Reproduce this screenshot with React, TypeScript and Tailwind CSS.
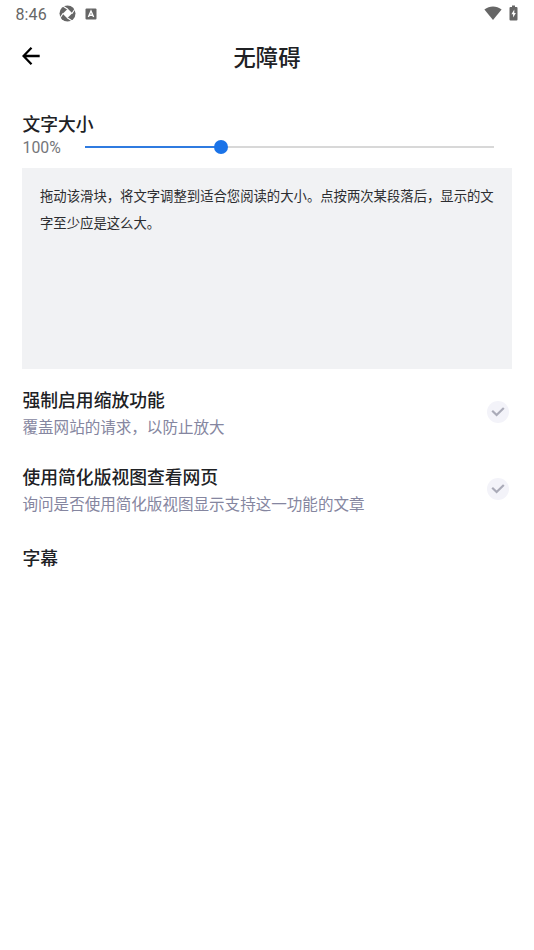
import React, { useState } from 'react';

interface SettingRowProps {
  title: string;
  summary: string;
  className?: string;
}

const CheckMark: React.FC = () => (
  <span className="flex h-[22px] w-[22px] shrink-0 items-center justify-center rounded-full bg-[#f3f3f9]">
    <svg width="14" height="10" viewBox="0 0 14 10" fill="none">
      <path d="M1.2 3.7 5.6 8 12.8 1" stroke="#aaabb8" strokeWidth="2.2" />
    </svg>
  </span>
);

const SettingRow: React.FC<SettingRowProps> = ({ title, summary, className }) => (
  <div className={`flex items-center justify-between pr-[25px] pl-[22.5px] ${className ?? ''}`}>
    <div>
      <h2 className="pt-px text-[17.8px] leading-[28px] font-medium text-[#202124]">{title}</h2>
      <p className="text-[15.55px] leading-[27px] text-[#8586a0]">{summary}</p>
    </div>
    <CheckMark />
  </div>
);

const StatusBar: React.FC = () => (
  <div className="flex h-7 items-center justify-between pr-4 pl-[15.5px] text-[#666666]">
    <div className="flex items-center">
      <span className="w-[43px] pt-px font-[Roboto] text-[16px] leading-[27px] tracking-[0.1px]">8:46</span>
      {/* shutter style notification icon */}
      <svg className="mb-px" width="17" height="17" viewBox="0 0 17 17" fill="none">
        <circle cx="8.5" cy="8.5" r="8" fill="currentColor" />
        <path d="M8.8 3.7 13.3 8.2 8.2 13.3 3.7 8.8Z" fill="#fff" />
        <path d="M8.8 4.2 4.2 1.2M12.8 8.8l3-4.600M8.200 12.800l4.600 3M4.200 8.200 1.200 12.800" stroke="#fff" strokeWidth="1.1" />
      </svg>
      <svg className="mb-px ml-[9.5px]" width="12" height="12" viewBox="0 0 12 12" fill="none">
        <rect x="0.5" y="0.5" width="11" height="11" rx="1" fill="currentColor" />
        <path d="M3.4 9 6 3l2.6 6M4.3 7.2h3.4" stroke="#fff" strokeWidth="1.4" />
      </svg>
    </div>
    <div className="flex items-center gap-[7px]">
      <svg className="mb-[3px]" width="18" height="14" viewBox="0 0 18 14">
        <path d="M9 14 .4 3.4C5.6-.6 12.4-.6 17.6 3.4Z" fill="currentColor" />
      </svg>
      <svg className="mb-[3px]" width="9" height="16" viewBox="0 0 9 16">
        <path d="M3 .5h3V2h1.5a1 1 0 0 1 1 1v11.5a1 1 0 0 1-1 1h-6a1 1 0 0 1-1-1V3a1 1 0 0 1 1-1H3Z" fill="currentColor" />
        <path d="M5.3 4.5 2.4 9.3h1.7v3.3l2.8-4.7H5.3Z" fill="#fff" />
      </svg>
    </div>
  </div>
);

const App: React.FC = () => {
  const [scale, setScale] = useState(100);
  // slider runs from 50% to 200%
  const percent = ((scale - 50) / 150) * 100;

  return (
    <main className="h-[950px] w-[534px] overflow-hidden bg-white font-['Noto_Sans_CJK_SC',sans-serif] text-[#202124]">
      <StatusBar />

      <header className="grid h-[60px] grid-cols-[1fr_auto_1fr] items-center px-[22px]">
        <button type="button" aria-label="返回" className="mb-1">
          <svg width="19" height="20" viewBox="0 0 19 20" fill="none">
            <path d="M17.7 10H1.7M9.5 1.7 1.5 10l8 8.3" stroke="#000" strokeWidth="2.3" />
          </svg>
        </button>
        <h1 className="mb-1 text-[22.3px] leading-8 font-medium">无障碍</h1>
      </header>

      <section className="px-[22px] pt-[21px]">
        <h2 className="pl-[0.5px] text-[17.8px] leading-[28px] font-medium">文字大小</h2>
        <div className="mt-px flex h-[17px] items-center">
          <span className="w-[62.5px] pt-[3px] pl-[0.5px] font-[Roboto] text-[15.8px] text-[#75767a]">{scale}%</span>
          <div className="relative flex h-[14px] w-[409.5px] items-center">
            <div className="h-[2px] w-full bg-[#d8d8d8]" />
            <div className="absolute left-0 h-[2px] bg-[#2f7be0]" style={{ width: `${percent}%` }} />
            <div
              className="absolute h-[14px] w-[14px] -translate-x-1/2 rounded-full bg-[#1a73e8]"
              style={{ left: `${percent}%` }}
            />
            <input
              type="range"
              min={50}
              max={200}
              step={5}
              value={scale}
              onChange={(e) => setScale(Number(e.target.value))}
              className="absolute inset-0 w-full opacity-0"
            />
          </div>
        </div>
        <div className="mt-[13px] h-[201px] bg-[#f1f2f4] px-[18px] pt-[15px]">
          <p className="w-[456px] text-[13.35px] leading-[26.7px] text-[#2c2d30]">
            拖动该滑块，将文字调整到适合您阅读的大小。点按两次某段落后，显示的文字至少应是这么大。
          </p>
        </div>
      </section>

      <SettingRow className="mt-[15px]" title="强制启用缩放功能" summary="覆盖网站的请求，以防止放大" />
      <SettingRow
        className="mt-[21px]"
        title="使用简化版视图查看网页"
        summary="询问是否使用简化版视图显示支持这一功能的文章"
      />
      <h2 className="mt-[26px] pl-[22.5px] text-[17.8px] leading-[28px] font-medium">字幕</h2>
    </main>
  );
};

export default App;
